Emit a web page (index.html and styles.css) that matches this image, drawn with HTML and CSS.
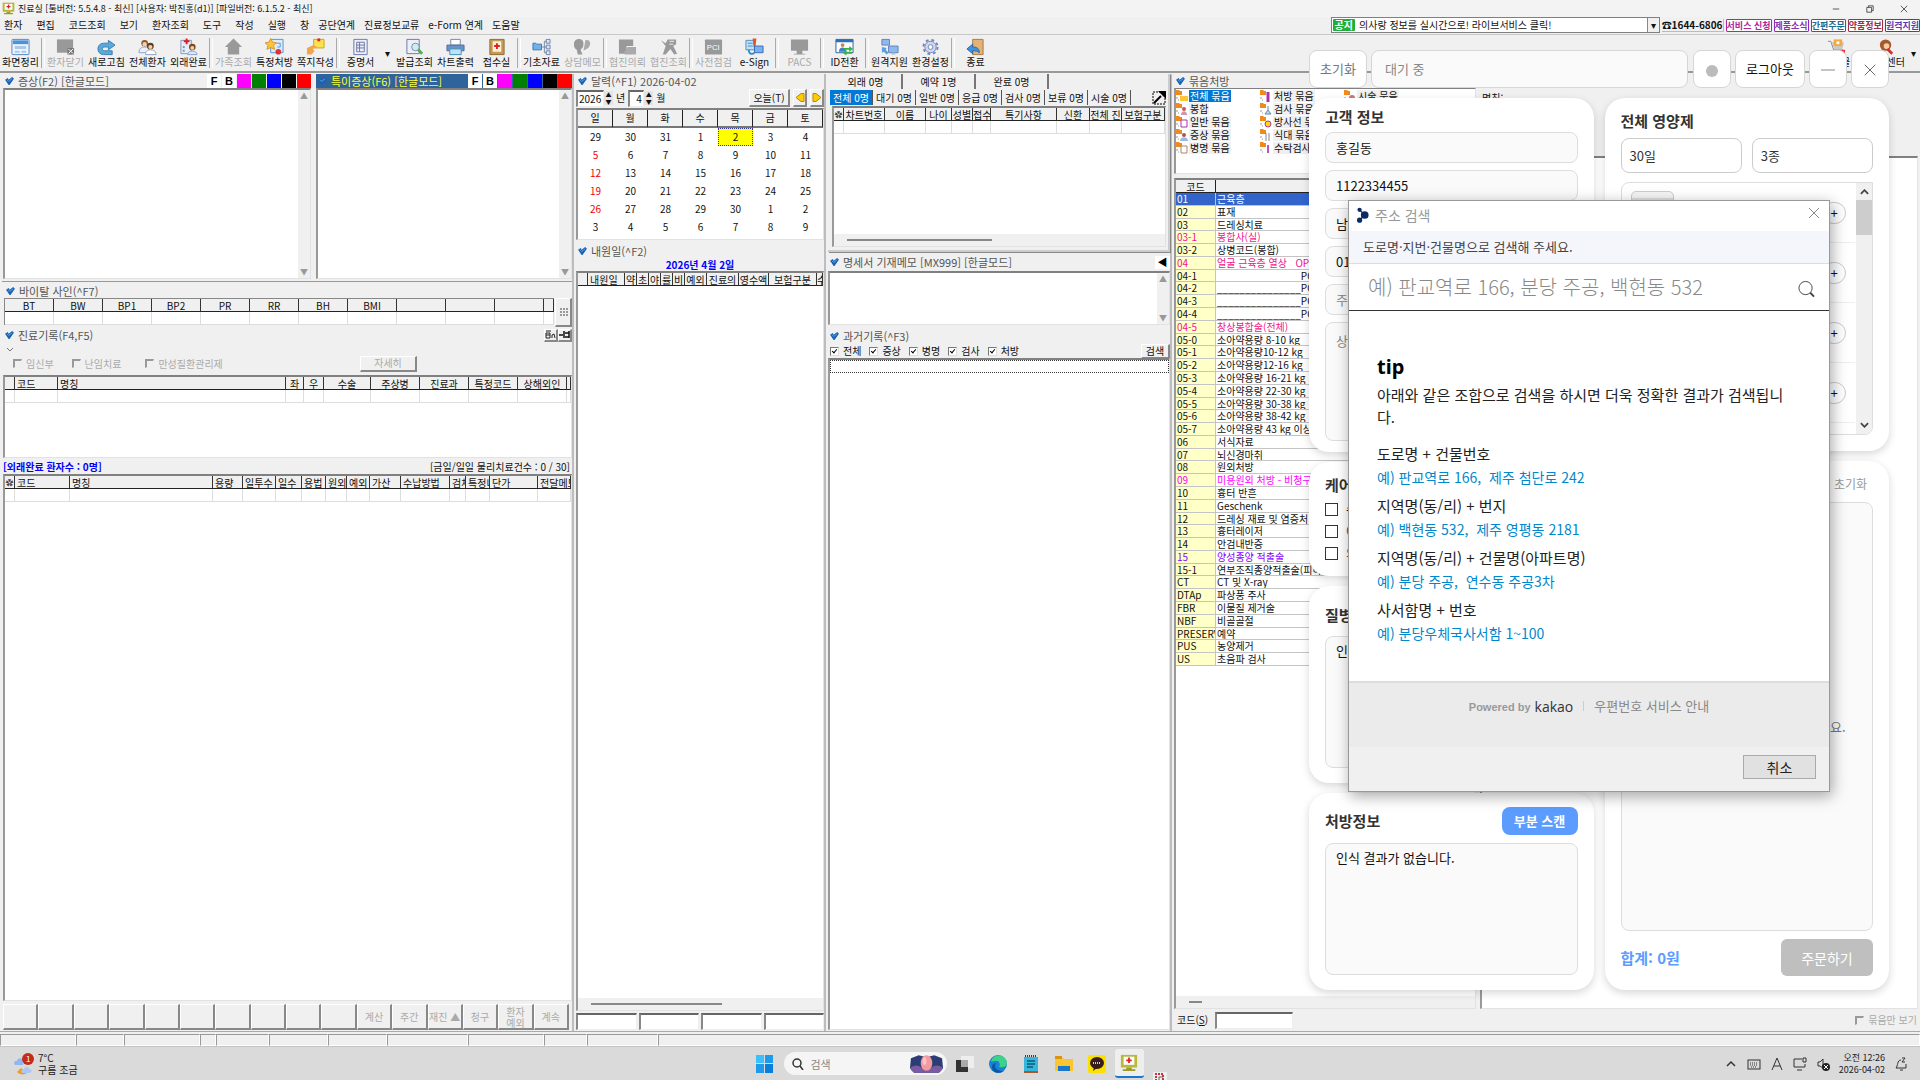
FILE: index.html
```html
<!DOCTYPE html>
<html lang="ko">
<head>
<meta charset="utf-8">
<title>진료실</title>
<link rel="stylesheet" href="styles.css">
</head>
<body>
<svg class="defs" aria-hidden="true">
  <symbol id="tick" viewBox="0 0 10 9"><path d="M0 3l3-2 1 2 4-3 2 2-5 7H4z" fill="#1762b5"/><path d="M2 3l2 2 4-3" fill="none" stroke="#6aa6e6"/></symbol>
  <symbol id="clinic" viewBox="0 0 20 20"><path d="M1 1h18v14H1z" fill="#b9b83a"/><path d="M4 3h12v9H4z" fill="#fff"/><path d="M7 15h6v2H7zM3 17h14v2H3z" fill="#9b9a2a"/><path d="M9 4h2v2h2v2h-2v2H9V8H7V6h2z" fill="#d22"/></symbol>
  <symbol id="person" viewBox="0 0 20 18"><circle cx="7" cy="5" r="3.500" fill="#8b5a2b"/><circle cx="7" cy="6" r="2.300" fill="#f6cfa4"/><path d="M1 15c0-5 3-6 6-6s5 1 5 4v2z" fill="#e9f0fa" stroke="#8aa0c4"/><circle cx="13" cy="8" r="3.600" fill="#5f3a1c"/><circle cx="13" cy="9" r="2.200" fill="#f6cfa4"/><path d="M8 17c0-4 2-5 5-5s6 1 6 5z" fill="#fff" stroke="#8aa0c4"/></symbol>
  <symbol id="pc" viewBox="0 0 20 18"><path d="M2 1h8v6H2zM9 8h10v7H9z" fill="#8fb9ee" stroke="#5c83bd"/><path d="M12 15h4v2h-4z" fill="#b5bfd0"/><path d="M2 9l5 1-1 2 3 3-2 2-3-3-2 1z" fill="#5aa0e0"/></symbol>
  <symbol id="folder" viewBox="0 0 12 12"><path d="M0 0h3l1 1h2v4H0z" fill="#f08a1d"/><path d="M1 7v2M2 10h1" stroke="#999"/></symbol>
</svg>

<header class="titlebar">
  <svg class="app-ico"><use href="#clinic"/></svg>
  <h1>진료실 [툴버전: 5.5.4.8 - 최신] [사용자: 박진홍(d1)] [파일버전: 6.1.5.2 - 최신]</h1>
  <div class="winctl">
    <button aria-label="최소화"><svg viewBox="0 0 10 10"><path d="M1 5h8" stroke="#333"/></svg></button>
    <button aria-label="복원"><svg viewBox="0 0 10 10"><path d="M1 3h6v6H1zM3 3V1h6v6H7" fill="none" stroke="#333"/></svg></button>
    <button aria-label="닫기"><svg viewBox="0 0 10 10"><path d="M1 1l8 8M9 1L1 9" stroke="#333"/></svg></button>
  </div>
</header>
<nav class="menubar">
  <div class="menus">
    <button>환자</button><button>편집</button><button>코드조회</button><button>보기</button><button>환자조회</button><button>도구</button><button>작성</button><button>실행</button><button>창</button><button>공단연계</button><button>진료정보교류</button><button>e-Form 연계</button><button>도움말</button>
  </div>
  <div class="notice"><b>공지</b><span>의사랑 정보를 실시간으로! 라이브서비스 클릭!</span><button aria-label="공지 목록">▾</button></div>
  <strong class="phone">☎1644-6806</strong>
  <div class="badges"><a href="#" class="pk">서비스 신청</a><a href="#" class="pu">제품소식</a><a href="#" class="bl">간편주문</a><a href="#" class="rd">약품정보</a><a href="#" class="vi">원격지원</a></div>
</nav>
<div class="toolbar">
  <button><svg viewBox="0 0 20 18"><rect x="1" y="1" width="18" height="16" rx="1" fill="#eef4fc" stroke="#4f86c6"/><path d="M2 2h16v4H2z" fill="#4d93dc"/><path d="M4 8h12v3H4zM4 13h5v2H4zM11 13h5v2h-5z" fill="#a9c8ea"/></svg>화면정리</button><i></i>
  <button disabled><svg viewBox="0 0 20 18"><path d="M1 1h17v14H1z" fill="#999"/><path d="M12 10h7v7h-7z" fill="#777"/><path d="M13 11l5 5M18 11l-5 5" stroke="#fff"/></svg>환자닫기</button>
  <button><svg viewBox="0 0 20 18"><path d="M12 2l7 5-7 5V9H8c-3 0-3 4 0 4h8v4H7C-1 17-1 5 7 5h5z" fill="#5aa9dd" stroke="#3a80b5"/></svg>새로고침</button>
  <button><svg><use href="#person"/></svg>전체환자</button>
  <button><svg viewBox="0 0 20 18"><path d="M2 2h11v14H2z" fill="#e5edf8" stroke="#7d96bd"/><path d="M7 0h2v2h2v2H9v2H7V4H5V2h2z" fill="#e02020"/><path d="M4 8h2v2H4zM4 12h2v2H4z" fill="#7d96bd"/><circle cx="14" cy="9" r="3.500" fill="#7b4a20"/><circle cx="14" cy="10" r="2" fill="#f6cfa4"/><path d="M9 17c0-5 10-5 10 0z" fill="#dce8f8" stroke="#8aa0c4"/></svg>외래완료</button><i></i>
  <button disabled><svg viewBox="0 0 20 18"><path d="M10 0l9 9h-3v8H4V9H1z" fill="#999"/></svg>가족조회</button>
  <button><svg viewBox="0 0 20 18"><path d="M6 1h13v14H6z" fill="#dcebfb" stroke="#5c93cf"/><path d="M12 5h4v4h-3" stroke="#5c93cf" fill="none"/><path d="M6 0l2 4 4 .5-3 3 1 4-4-2-4 2 1-4-3-3L4 4z" fill="#fbc53a" stroke="#d9962a"/><circle cx="14" cy="14" r="3" fill="#d93440"/></svg>특정처방</button>
  <button><svg viewBox="0 0 20 18"><path d="M8 1h11v9H8z" fill="#fbe24e" stroke="#c9a820"/><path d="M12 0h3v3h-3z" fill="#d22"/><path d="M1 10l7-3 4 2-5 2 2 2-3 4H1z" fill="#f1a54c"/></svg>쪽지작성</button><i></i>
  <button><svg viewBox="0 0 20 18"><path d="M3 1h14v16H3z" fill="#eceff8" stroke="#6b77a8"/><path d="M6 4h8v10H6zM6 7h8M6 10h8M9 4v10" fill="none" stroke="#6b77a8"/></svg>증명서</button><button class="drop" aria-label="증명서 메뉴">▾</button>
  <button><svg viewBox="0 0 20 18"><path d="M2 1h13v15H2z" fill="#eceff8" stroke="#6b77a8"/><circle cx="11" cy="9" r="4" fill="#cdeaf5" stroke="#7c8ea5"/><path d="M14 12l4 4" stroke="#4caf50" stroke-width="3"/></svg>발급조회</button>
  <button><svg viewBox="0 0 20 18"><path d="M5 1h10v6H5z" fill="#fff" stroke="#789"/><path d="M1 7h18v6H1z" fill="#6b92c8" stroke="#4a6c9e"/><path d="M4 11h12v6H4z" fill="#b9e3f7" stroke="#4a8cb5"/></svg>차트출력</button>
  <button><svg viewBox="0 0 20 18"><path d="M3 1h15v16H3z" fill="#c59a56" stroke="#8d6a30"/><path d="M6 3h9v11H6z" fill="#fff1d5"/><path d="M9.500 5h2v2h2v2h-2v2h-2V9h-2V7h2z" fill="#d22"/></svg>접수실</button><i></i>
  <button><svg viewBox="0 0 20 18"><path d="M1 5h3l1 1h5v6H1z" fill="#6fb1e8" stroke="#3a78b5"/><path d="M10 9h3M13 3v12M13 3h3M13 9h3M13 15h3" stroke="#789"/><path d="M15 1h4v4h-4zM15 7h4v4h-4zM15 13h4v4h-4z" fill="#dde6f5" stroke="#6b82b0"/></svg>기초자료</button>
  <button disabled><svg viewBox="0 0 20 18"><path d="M1 6c0-7 10-7 10-1s-2 5-3 7l2 5H5l-1-5c-2-1-3-3-3-6z" fill="#999"/><path d="M13 2c5-2 7 4 3 8l-5 3 1-5z" fill="#aaa"/></svg>상담메모</button><i></i>
  <button disabled><svg viewBox="0 0 20 18"><path d="M1 1h15v7H9v8H1z" fill="#999"/><path d="M10 9h9v8H7v-3z" fill="#aaa"/></svg>협진의뢰</button>
  <button disabled><svg viewBox="0 0 20 18"><path d="M2 2l5 3 2-4h9v5l-3 2 4 8-3 1-4-6-5 6H4l3-9z" fill="#999"/><path d="M11 3h5M11 6h4" stroke="#eee"/></svg>협진조회</button><i></i>
  <button disabled><svg viewBox="0 0 20 18"><rect x="1" y="1" width="18" height="16" rx="1" fill="#999"/><text x="3" y="12" font-size="8" fill="#fff">PCI</text></svg>사전점검</button>
  <button><svg viewBox="0 0 20 18"><path d="M1 2h9v10H1z" fill="#bfe0f7" stroke="#4a8cc0"/><path d="M3 5h5M3 8h5" stroke="#4a8cc0"/><path d="M8 0h4l-1 9H9z" fill="#e2542c"/><path d="M10 8h9v7h-9z" fill="#79b0ef" stroke="#3a6cb5"/><path d="M4 12c0 5 4 5 6 3" stroke="#3a8cc5" fill="none" stroke-width="2"/></svg>e-Sign</button><i></i>
  <button disabled><svg viewBox="0 0 20 18"><path d="M1 1h18v12H1zM7 13h6v3H7zM4 16h12v1H4z" fill="#999"/></svg>PACS</button><i></i>
  <button><svg viewBox="0 0 20 18"><path d="M1 1h18v14H1z" fill="#fff" stroke="#2c5f9e"/><path d="M1 1h18v3H1z" fill="#2c6fbe"/><circle cx="8" cy="7" r="2" fill="#c8864a"/><path d="M4 14c0-6 8-6 8 0z" fill="#3f7fc8"/><path d="M9 10h6V8l4 3-4 3v-2H9zM18 14h-6v-2l-4 3 4 3v-2h6z" fill="#33b24a"/></svg>ID전환</button><i></i>
  <button><svg><use href="#pc"/></svg>원격지원</button>
  <button><svg viewBox="0 0 20 18"><circle cx="10" cy="9" r="6" fill="#cfd8ee" stroke="#7285b8"/><circle cx="10" cy="9" r="7.500" fill="none" stroke="#7285b8" stroke-width="2" stroke-dasharray="3 3"/><circle cx="10" cy="9" r="2.500" fill="#fff" stroke="#7285b8"/></svg>환경설정</button><i></i>
  <button><svg viewBox="0 0 20 18"><path d="M7 1h11v16H7z" fill="#e2b277" stroke="#a87a40"/><path d="M1 11l6-5v3c5 0 7 2 7 6-2-2-4-2-7-2v3z" fill="#3f93de" stroke="#2467ab"/></svg>종료</button>
  <div class="tool-end">
    <button><svg viewBox="0 0 20 18"><path d="M1 3h3l3 9h10" fill="none" stroke="#888"/><path d="M5 4h13l-2 8H8z" fill="#c9c9c9"/><path d="M7 1h9v7H7z" fill="#f6a83c"/><path d="M10 3h3v3h-3z" fill="#fff"/><path d="M8 12h11v5H8z" fill="#e33"/></svg>쇼핑몰</button>
    <button><svg viewBox="0 0 20 18"><circle cx="9" cy="7" r="6" fill="#a9572c"/><circle cx="10" cy="8" r="3" fill="#f6cfa4"/><path d="M11 11l5 5" stroke="#c33" stroke-width="3"/></svg>고객센터</button>
    <button class="drop" aria-label="더 보기">▾</button>
  </div>
</div>

<main>
  <section class="col left">
    <div class="pair">
      <section class="note">
        <header class="ph"><svg><use href="#tick"/></svg><h2>증상(F2) [한글모드]</h2><div class="swatches"><button>F</button><button>B</button><i class="c1"></i><i class="c2"></i><i class="c3"></i><i class="c4"></i><i class="c5"></i></div></header>
        <div class="sunk scrollbox"><textarea aria-label="증상"></textarea><div class="vbar"><span>▲</span><span>▼</span></div></div>
      </section>
      <section class="note">
        <header class="ph on"><svg><use href="#tick"/></svg><h2>특이증상(F6) [한글모드]</h2><div class="swatches"><button>F</button><button>B</button><i class="c1"></i><i class="c2"></i><i class="c3"></i><i class="c4"></i><i class="c5"></i></div></header>
        <div class="sunk scrollbox"><textarea aria-label="특이증상"></textarea><div class="vbar"><span>▲</span><span>▼</span></div></div>
      </section>
    </div>
    <section class="vital">
      <header class="ph"><svg><use href="#tick"/></svg><h2>바이탈 사인(^F7)</h2></header>
      <div class="vital-row">
        <table class="grid mid"><colgroup><col span="11" class="w49"><col></colgroup>
          <thead><tr><th>BT</th><th>BW</th><th>BP1</th><th>BP2</th><th>PR</th><th>RR</th><th>BH</th><th>BMI</th><th></th><th></th><th></th><th></th></tr></thead>
          <tbody><tr><td></td><td></td><td></td><td></td><td></td><td></td><td></td><td></td><td></td><td></td><td></td><td></td></tr></tbody></table>
        <button class="raised more" aria-label="더 보기"><svg viewBox="0 0 9 8"><path d="M1 1h2M4 1h2M7 1h2M1 4h2M4 4h2M7 4h2M1 7h2M4 7h2M7 7h2" stroke="#444"/></svg></button>
      </div>
    </section>
    <section class="record">
      <header class="ph"><svg><use href="#tick"/></svg><h2>진료기록(F4,F5)</h2><div class="mini"><button class="raised" aria-label="보기"><svg viewBox="0 0 11 9"><path d="M1 1h5M1 3h4v5H1zM1 5h4M7 8V5l2-1 1 4" fill="none" stroke="#222"/></svg></button><button class="raised" aria-label="고정"><svg viewBox="0 0 11 9"><path d="M0 5h4M5 1v7M6 3h4v4H6M10 1v7" fill="none" stroke="#111" stroke-width="1.500"/></svg></button></div></header>
      <div class="chev"><svg viewBox="0 0 8 5"><path d="M1 1l3 3 3-3" fill="none" stroke="#777"/></svg></div>
      <div class="flags"><label><input type="checkbox" disabled>임신부</label><label><input type="checkbox" disabled>난임치료</label><label class="far"><input type="checkbox" disabled>만성질환관리제</label><button class="raised" disabled>자세히</button></div>
      <div class="sunk dx"><table class="grid"><colgroup><col class="w10"><col class="w43"><col><col class="w18"><col class="w20"><col class="w47"><col class="w49"><col class="w49"><col class="w49"><col class="w49"><col class="w4"></colgroup>
        <thead><tr><th></th><th class="l">코드</th><th class="l">명칭</th><th>좌</th><th>우</th><th>수술</th><th>주상병</th><th>진료과</th><th>특정코드</th><th>상해외인</th><th></th></tr></thead>
        <tbody><tr><td></td><td></td><td></td><td></td><td></td><td></td><td></td><td></td><td></td><td></td><td></td></tr></tbody></table></div>
    </section>
    <section class="orders">
      <div class="counts"><strong>[외래완료 환자수 : 0명]</strong><span>[금일/일일 물리치료건수 : 0 / 30]</span></div>
      <div class="sunk grow"><table class="grid"><colgroup><col class="w10"><col class="w55"><col><col class="w30"><col class="w33"><col class="w26"><col class="w24"><col class="w21"><col class="w23"><col class="w31"><col class="w49"><col class="w16"><col class="w24"><col class="w48"><col class="w33"></colgroup>
        <thead><tr><th class="g">✿</th><th class="l">코드</th><th class="l">명칭</th><th class="l">용량</th><th class="l">일투수</th><th class="l">일수</th><th class="l">용법</th><th class="l">원외</th><th class="l">예외</th><th class="l">가산</th><th class="l">수납방법</th><th class="l">검체</th><th class="l">특정내</th><th class="l">단가</th><th class="l">전달메모</th></tr></thead>
        <tbody><tr><td></td><td></td><td></td><td></td><td></td><td></td><td></td><td></td><td></td><td></td><td></td><td></td><td></td><td></td><td></td></tr></tbody></table></div>
      <div class="actions"><button></button><button></button><button></button><button></button><button></button><button></button><button></button><button></button><button></button><button></button><button disabled>계산</button><button disabled>주간</button><button disabled>재진 ▲</button><button disabled>청구</button><button disabled>환자<br>예외</button><button disabled>계속</button></div>
    </section>
  </section>

  <section class="col cal">
    <header class="ph"><svg><use href="#tick"/></svg><h2>달력(^F1) 2026-04-02</h2></header>
    <div class="calctl"><input type="text" class="yr" value="2026" aria-label="년"><span class="spin">▲<br>▼</span><span>년</span><input type="text" class="mo" value="4" aria-label="월"><span class="spin">▲<br>▼</span><span>월</span><button class="raised today">오늘(T)</button><button class="raised nav" aria-label="이전"><svg viewBox="0 0 10 10"><path d="M1 5l5-4h3v8H6z" fill="#fc0" stroke="#b80"/></svg></button><button class="raised nav" aria-label="다음"><svg viewBox="0 0 10 10"><path d="M9 5L4 1H1v8h3z" fill="#fc0" stroke="#b80"/></svg></button></div>
    <div class="sunk month"><table>
      <thead><tr><th>일</th><th>월</th><th>화</th><th>수</th><th>목</th><th>금</th><th>토</th></tr></thead>
      <tbody>
      <tr><td class="k">29</td><td>30</td><td>31</td><td>1</td><td class="sel">2</td><td>3</td><td>4</td></tr>
      <tr><td>5</td><td>6</td><td>7</td><td>8</td><td>9</td><td>10</td><td>11</td></tr>
      <tr><td>12</td><td>13</td><td>14</td><td>15</td><td>16</td><td>17</td><td>18</td></tr>
      <tr><td>19</td><td>20</td><td>21</td><td>22</td><td>23</td><td>24</td><td>25</td></tr>
      <tr><td>26</td><td>27</td><td>28</td><td>29</td><td>30</td><td>1</td><td>2</td></tr>
      <tr><td class="k">3</td><td>4</td><td>5</td><td>6</td><td>7</td><td>8</td><td>9</td></tr>
      </tbody></table></div>
    <header class="ph visit"><svg><use href="#tick"/></svg><h2>내원일(^F2)</h2></header>
    <p class="date">2026년 4월 2일</p>
    <div class="sunk grow list"><table class="grid"><colgroup><col class="w10"><col><col class="w12"><col class="w12"><col class="w12"><col class="w12"><col class="w12"><col class="w22"><col class="w32"><col class="w30"><col class="w48"><col class="w6"></colgroup>
      <thead><tr><th></th><th class="l">내원일</th><th>약</th><th>초</th><th>야</th><th>률</th><th>비</th><th>예외</th><th>진료의</th><th>영수액</th><th>보험구분</th><th>수</th></tr></thead></table>
      <div class="hbar"><span></span></div></div>
    <div class="sums"><input type="text" aria-label="합계 1"><input type="text" aria-label="합계 2"><input type="text" aria-label="합계 3"><input type="text" aria-label="합계 4"></div>
  </section>

  <section class="col queue">
    <div class="frame">
      <div class="tabs"><button class="cur">외래 0명</button><button>예약 1명</button><button>완료 0명</button></div>
      <div class="subtabs"><button class="cur">전체 0명</button><button>대기 0명</button><button>일반 0명</button><button>응급 0명</button><button>검사 0명</button><button>보류 0명</button><button>시술 0명</button><svg viewBox="0 0 14 14"><path d="M1 1h12v12H1z" fill="none" stroke="#000" stroke-dasharray="2 1"/><path d="M6 0h8v8z"/><path d="M2 12l7-7" stroke="#000" stroke-width="2"/></svg></div>
      <div class="sunk patients"><table class="grid"><colgroup><col class="w10"><col class="w41"><col class="w41"><col class="w26"><col class="w21"><col class="w18"><col><col class="w33"><col class="w32"><col class="w43"></colgroup>
        <thead><tr><th class="g">✿</th><th>차트번호</th><th>이름</th><th>나이</th><th>성별</th><th>접수</th><th>특기사항</th><th>신환</th><th>전체 진</th><th>보험구분</th></tr></thead>
        <tbody><tr><td></td><td></td><td></td><td></td><td></td><td></td><td></td><td></td><td></td><td></td></tr></tbody></table>
        <div class="hbar"><span></span></div></div>
    </div>
    <header class="ph memo-h"><svg><use href="#tick"/></svg><h2>명세서 기재메모 [MX999] [한글모드]</h2><button class="fold" aria-label="접기">◀</button></header>
    <div class="sunk scrollbox memo"><textarea aria-label="명세서 기재메모"></textarea><div class="vbar"><span>▲</span><span>▼</span></div></div>
    <header class="ph past"><svg><use href="#tick"/></svg><h2>과거기록(^F3)</h2></header>
    <div class="checks"><label><input type="checkbox" checked>전체</label><label><input type="checkbox" checked>증상</label><label><input type="checkbox" checked>병명</label><label><input type="checkbox" checked>검사</label><label><input type="checkbox" checked>처방</label><button class="raised">검색</button></div>
    <div class="sunk grow history"><div class="focus"></div></div>
  </section>

  <section class="col bundle">
    <header class="ph"><svg><use href="#tick"/></svg><h2>묶음처방</h2></header>
    <div class="split">
      <div class="codes">
        <ul class="sunk tree">
          <li class="cur"><svg><use href="#folder"/><path d="M4 6h8v5H4z" fill="#fbc53a"/></svg><span>전체 묶음</span></li><li><svg><use href="#folder"/><circle cx="8" cy="6" r="2" fill="#c55"/><path d="M5 12c0-5 6-5 6 0z" fill="#c9a"/></svg><span>봉합</span></li><li><svg><use href="#folder"/><path d="M5 4h6v7H5z" fill="#fff" stroke="#a3a"/></svg><span>일반 묶음</span></li><li><svg><use href="#folder"/><circle cx="8" cy="6" r="2" fill="#a55"/><path d="M4 12c0-5 8-5 8 0z" fill="#9bd"/></svg><span>증상 묶음</span></li><li><svg><use href="#folder"/><path d="M5 4h6v7H5z" fill="#fff" stroke="#a86"/></svg><span>병명 묶음</span></li>
          <li><svg><use href="#folder"/><path d="M8 2v10" stroke="#a3a" stroke-width="3"/></svg><span>처방 묶음</span></li><li><svg><use href="#folder"/><path d="M8 3v4l-3 4h6l-3-4" fill="#bde" stroke="#68a"/></svg><span>검사 묶음</span></li><li><svg><use href="#folder"/><circle cx="8" cy="8" r="3" fill="#fd0" stroke="#a3a"/></svg><span>방사선 묶음</span></li><li><svg><use href="#folder"/><path d="M6 4v8M9 4v8" stroke="#888"/></svg><span>식대 묶음</span></li><li><svg><use href="#folder"/><path d="M8 3v8" stroke="#b5b" stroke-width="2"/></svg><span>수탁검사</span></li>
          <li><svg><use href="#folder"/><circle cx="8" cy="8" r="3" fill="#c77"/></svg><span>시술 묶음</span></li>
        </ul>
        <div class="sunk grow codebox"><table class="code">
          <thead><tr><th>코드</th><th>명칭</th></tr></thead>
          <tbody>
          <tr class="sel"><td>01</td><td>근육층</td></tr><tr><td>02</td><td>표재</td></tr><tr><td>03</td><td>드레싱치료</td></tr><tr class="pink"><td>03-1</td><td>봉합사(실)</td></tr><tr><td>03-2</td><td>상병코드(봉합)</td></tr><tr class="pink"><td>04</td><td>얼굴 근육층 열상 &nbsp; OP</td></tr><tr><td>04-1</td><td>_______________POD</td></tr><tr><td>04-2</td><td>_______________POD</td></tr><tr><td>04-3</td><td>_______________POD</td></tr><tr><td>04-4</td><td>_______________POD</td></tr><tr class="pink"><td>04-5</td><td>창상봉합술(전체)</td></tr><tr><td>05-0</td><td>소아약용량 8-10 kg</td></tr><tr><td>05-1</td><td>소아약용량10-12 kg</td></tr><tr><td>05-2</td><td>소아약용량12-16 kg</td></tr><tr><td>05-3</td><td>소아약용량 16-21 kg</td></tr><tr><td>05-4</td><td>소아약용량 22-30 kg</td></tr><tr><td>05-5</td><td>소아약용량 30-38 kg</td></tr><tr><td>05-6</td><td>소아약용량 38-42 kg</td></tr><tr><td>05-7</td><td>소아약용량 43 kg 이상</td></tr><tr><td>06</td><td>서식자료</td></tr><tr><td>07</td><td>뇌신경마취</td></tr><tr><td>08</td><td>원외처방</td></tr><tr class="mag"><td>09</td><td>미용원외 처방 - 비청구</td></tr><tr><td>10</td><td>흉터 반흔</td></tr><tr><td>11</td><td>Geschenk</td></tr><tr><td>12</td><td>드레싱 재료 및 염증처치</td></tr><tr><td>13</td><td>흉터레이저</td></tr><tr><td>14</td><td>안검내반증</td></tr><tr class="vio"><td>15</td><td>양성종양 적출술</td></tr><tr><td>15-1</td><td>연부조직종양적출술(피하)</td></tr><tr><td>CT</td><td>CT 및 X-ray</td></tr><tr><td>DTAp</td><td>파상풍 주사</td></tr><tr><td>FBR</td><td>이물질 제거술</td></tr><tr><td>NBF</td><td>비골골절</td></tr><tr><td>PRESERV</td><td>예약</td></tr><tr><td>PUS</td><td>농양제거</td></tr><tr><td>US</td><td>초음파 검사</td></tr>
          </tbody></table><div class="hbar"><span></span></div></div>
      </div>
      <div class="detail"><p>명칭:</p><div class="sunk grow"></div></div>
    </div>
    <div class="codefoot"><label><span>코드(<u>S</u>)</span><input type="text"></label><label class="off"><input type="checkbox" disabled>묶음만 보기</label></div>
  </section>
</main>
<div class="statusbar"><i class="w76"></i><i class="w48"></i><i class="w76"></i><i class="w16"></i><i class="w53"></i><i class="w59"></i><i class="w59"></i><i class="w81"></i><i class="w76"></i><i class="w43"></i><i class="w71"></i><i class="rest"></i></div>

<footer class="taskbar">
  <div class="weather"><svg viewBox="0 0 20 24"><path d="M3 20c4 4 11 3 13-3-4 2-7 1-9-1z" fill="#f39a1f"/><path d="M2 13c-3 0-2-5 1-4 1-4 6-3 6 0v4z" fill="#8fb8f0"/><path d="M9 21c-3 0-2-4 1-4 1-3 5-2 5 0 4 0 3 4 0 4z" fill="#a9c8f5"/><circle cx="14" cy="7" r="6" fill="#c42b1c"/><text x="12" y="10" font-size="8" fill="#fff">1</text></svg><p>7°C<br>구름 조금</p></div>
  <div class="apps">
    <svg class="a17" viewBox="0 0 17 18"><path d="M0 0h8v8H0z" fill="#3cc0fb"/><path d="M9 0h8v8H9zM0 9h8v9H0z" fill="#1c9bec"/><path d="M9 9h8v9H9z" fill="#0a7edc"/></svg>
    <label class="search"><svg viewBox="0 0 12 12"><circle cx="5" cy="5" r="4" fill="none" stroke="#333" stroke-width="1.500"/><path d="M8 8l3 4" stroke="#333" stroke-width="1.500"/></svg><input type="text" placeholder="검색" aria-label="검색"><svg class="flower" viewBox="0 0 36 20"><path d="M2 4l8-3 8 2 8-2 8 3 1 10-4 5H5l-4-5z" fill="#2b3d73"/><path d="M1 14c8-6 12 0 17 3 5-3 9-9 17-3-3 6-7 5-11 5H10c-5 0-7-1-9-5z" fill="#7a5aa0"/><ellipse cx="18" cy="9" rx="6" ry="8" fill="#f29aa0"/><ellipse cx="16" cy="7" rx="2" ry="4" fill="#fbc4c4"/></svg></label>
    <svg class="a18" viewBox="0 0 18 18"><path d="M5 1h13v12H5z" fill="#eee"/><path d="M0 5h12v12H0z" fill="#333"/><path d="M5 5h7v7H5z" fill="#aaa"/></svg>
    <svg class="a18" viewBox="0 0 18 18"><circle cx="9" cy="9" r="9" fill="#1684d0"/><path d="M2 6c3-8 15-7 16 2 0 4-5 5-8 4 2-3 0-7-4-6-2 0-3 1-4 0z" fill="#3fd08a"/><path d="M7 8c-3 4 1 9 8 8-7 5-15-1-11-7z" fill="#0b56a5"/></svg>
    <svg class="a18" viewBox="0 0 18 18"><path d="M2 2h14v14H2z" fill="#35b7dc"/><path d="M5 6h8M5 9h8M5 12h6" stroke="#0c5878" stroke-width="1.500"/><path d="M3 1h12" stroke="#246" stroke-width="2" stroke-dasharray="1 1"/><path d="M2 16h14v2H2z" fill="#a8562a"/></svg>
    <svg class="a18" viewBox="0 0 18 18"><path d="M0 2h7l2 2h9v12H0z" fill="#f9c531"/><path d="M0 1h7v3H0z" fill="#d99411"/><path d="M3 11h12v5H3z" fill="#1878cc"/></svg>
    <svg class="a18" viewBox="0 0 18 18"><rect width="18" height="18" rx="2" fill="#fae100"/><ellipse cx="9" cy="8" rx="7" ry="6" fill="#371d1e"/><path d="M6 12l-1 4 4-3z" fill="#371d1e"/><path d="M5 8h8" stroke="#fae100" stroke-width="2" stroke-dasharray="1 1"/></svg>
    <span class="live"><svg class="a18"><use href="#clinic"/></svg></span>
    <svg class="snip" viewBox="0 0 14 9"><path d="M0 0h14v9H0z" fill="#eee"/><path d="M3 9V2h7v7" fill="none" stroke="#c33" stroke-width="2" stroke-dasharray="2 1"/><path d="M6 9V5h4" fill="none" stroke="#567"/></svg>
  </div>
  <div class="tray">
    <svg viewBox="0 0 14 14"><path d="M3 9l4-4 4 4" fill="none" stroke="#333" stroke-width="1.500"/></svg>
    <svg viewBox="0 0 14 14"><rect x="1" y="3" width="12" height="9" fill="none" stroke="#333"/><path d="M3 6h8M3 8h8M4 10h6" stroke="#333" stroke-dasharray="1 1"/></svg>
    <svg viewBox="0 0 14 14"><path d="M2 13L7 1l5 12M4 9h6" fill="none" stroke="#333"/></svg>
    <svg viewBox="0 0 14 14"><path d="M9 2H1v8h11V7M4 13h5M10 1h3v4h-3z" fill="none" stroke="#333"/></svg>
    <svg viewBox="0 0 14 14"><path d="M2 5h2l3-3v9L4 9H2z" fill="none" stroke="#333"/><circle cx="10" cy="10" r="4" fill="#222"/><path d="M8 8l4 4M12 8l-4 4" stroke="#fff"/></svg>
    <time>오전 12:26<br>2026-04-02</time>
    <svg viewBox="0 0 14 14"><path d="M2 11c2-2 1-8 5-8M12 7v4H2M6 13h3" fill="none" stroke="#333"/><path d="M8 1h3L8 5h3" fill="none" stroke="#333"/></svg>
  </div>
</footer>

<aside class="widget">
  <div class="wtop"><button class="gray">초기화</button><output>대기 중</output><button class="sq" aria-label="상태"><i></i></button><button class="out">로그아웃</button><button class="sq" aria-label="접기"><svg viewBox="0 0 16 16"><path d="M0 8h16" stroke="#777"/></svg></button><button class="sq" aria-label="닫기"><svg viewBox="0 0 16 16"><path d="M2 2l12 12M14 2L2 14" stroke="#555"/></svg></button></div>
  <div class="wcols">
    <div class="wcol">
      <section class="card cust"><h2>고객 정보</h2><input type="text" value="홍길동" aria-label="이름"><input type="text" value="1122334455" aria-label="번호"><input type="text" value="남" aria-label="성별"><input type="text" value="010" aria-label="전화"><input type="text" placeholder="주소" aria-label="주소"><textarea placeholder="상세 주소" aria-label="상세 주소"></textarea></section>
      <section class="card care"><h2>케어</h2><label><input type="checkbox">수면</label><label class="b"><input type="checkbox">여성</label><label class="r"><input type="checkbox">외상</label></section>
      <section class="card dis"><h2>질병정보</h2><textarea aria-label="질병정보">인식 결과가 없습니다.</textarea></section>
      <section class="card rx"><header><h2>처방정보</h2><button>부분 스캔</button></header><textarea aria-label="처방정보">인식 결과가 없습니다.</textarea></section>
    </div>
    <div class="wcol">
      <section class="card supp"><h2>전체 영양제</h2><div class="two"><button>30일</button><button>3종</button></div>
        <div class="items"><ul><li><i></i><button>+</button></li><li><i></i><button>+</button></li><li><i></i><button>+</button></li><li><i></i><button>+</button></li></ul><div class="sbar"><svg viewBox="0 0 10 6"><path d="M1 5l4-4 4 4" fill="none" stroke="#444" stroke-width="2"/></svg><b></b><svg viewBox="0 0 10 6"><path d="M1 1l4 4 4-4" fill="none" stroke="#444" stroke-width="2"/></svg></div></div>
      </section>
      <section class="card cart"><header><h2>주문 목록</h2><button class="txt">초기화</button></header><div class="empty">주문할 제품이 없습니다.<br>추가할 영양제를 먼저 선택해 주세요.</div><footer><strong>합계: 0원</strong><button>주문하기</button></footer></section>
    </div>
  </div>
</aside>

<section class="dialog" role="dialog" aria-labelledby="dt">
  <header><svg viewBox="0 0 14 18"><circle cx="9" cy="9" r="4.500" fill="#0b2a66"/><circle cx="3" cy="3" r="2.500" fill="#0b2a66"/><circle cx="3" cy="15" r="3" fill="#0b2a66"/><path d="M3 3l6 6-6 6" fill="none" stroke="#0b2a66" stroke-width="1.500"/></svg><h2 id="dt">주소 검색</h2><button aria-label="닫기"><svg viewBox="0 0 12 12"><path d="M1 1l10 10M11 1L1 11" stroke="#888"/></svg></button></header>
  <p class="guide">도로명·지번·건물명으로 검색해 주세요.</p>
  <div class="find"><input type="text" placeholder="예) 판교역로 166, 분당 주공, 백현동 532" aria-label="주소 검색어"><button aria-label="검색"><svg viewBox="0 0 18 18"><circle cx="8" cy="8" r="7" fill="none" stroke="#444"/><path d="M13 13l4 4" stroke="#444" stroke-width="2"/></svg></button></div>
  <div class="tips"><h3>tip</h3><p>아래와 같은 조합으로 검색을 하시면 더욱 정확한 결과가 검색됩니<br>다.</p>
    <dl><dt>도로명 + 건물번호</dt><dd>예) 판교역로 166, &nbsp;제주 첨단로 242</dd><dt>지역명(동/리) + 번지</dt><dd>예) 백현동 532, &nbsp;제주 영평동 2181</dd><dt>지역명(동/리) + 건물명(아파트명)</dt><dd>예) 분당 주공, &nbsp;연수동 주공3차</dd><dt>사서함명 + 번호</dt><dd>예) 분당우체국사서함 1~100</dd></dl></div>
  <div class="power"><span>Powered by</span><b>kakao</b><a href="#">우편번호 서비스 안내</a></div>
  <footer><button>취소</button></footer>
</section>
</body>
</html>
```
FILE: styles.css
```css
* { box-sizing: border-box; margin: 0; padding: 0; }
html, body { height: 100%; }
body { display: flex; flex-direction: column; position: relative; overflow: hidden; background: #f0f0f0; color: #111; font: 10px/12px "Noto Sans CJK KR", sans-serif; white-space: nowrap; }
button, input, textarea { font: inherit; color: inherit; border: 0; background: none; outline: 0; border-radius: 0; }
textarea { resize: none; display: block; white-space: pre-wrap; }
ul { list-style: none; }
a { text-decoration: none; }
i { font-style: normal; }
.defs { position: absolute; width: 0; height: 0; }
h1, h2 { font-size: 11px; font-weight: 400; }

.titlebar { display: flex; align-items: center; height: 17px; padding-left: 2px; background: #f3f3f3; }
.titlebar h1 { flex: 1; margin-left: 3px; font-size: 9px; }
.app-ico { width: 13px; height: 13px; }
.winctl { display: flex; gap: 14px; padding-right: 6px; }
.winctl button { width: 20px; height: 14px; line-height: 8px; }
.winctl svg { width: 8px; height: 8px; }
.menubar { display: flex; align-items: center; height: 17px; padding-bottom: 1px; }
.menus { display: flex; gap: 14px; flex: 1; padding-left: 4px; }
.menus button:nth-child(n+10) { margin-left: -5px; }
.notice { display: flex; align-items: center; width: 329px; height: 16px; background: #fff; border: 1px solid #808080; padding-left: 1px; }
.notice b { background: #1fae3c; color: #fff; padding: 0 2px; margin-right: 4px; border-radius: 1px; }
.notice span { flex: 1; }
.notice button { width: 12px; height: 14px; background: #f0f0f0; border-left: 1px solid #888; }
.phone { width: 62px; margin: 0 2px; text-align: center; border: 1px solid #bbb; border-width: 0 1px 1px 0; }
.badges { display: flex; gap: 2px; font-size: 9px; line-height: 11px; font-weight: 700; }
.badges a { border: 1px solid; border-radius: 1px; background: #fff; height: 13px; }
.pk { color: #b0269c; } .pu { color: #8c2fb5; } .bl { color: #1e6c92; } .rd { color: #a03048; } .vi { color: #5a38b0; }
.toolbar { display: flex; height: 39px; border-top: 1px solid #c8c8c8; border-bottom: 2px solid #999; }
.toolbar button { display: flex; flex-direction: column; align-items: center; width: 41px; padding-top: 3px; line-height: 12px; }
.toolbar svg { width: 19px; height: 18px; flex: none; font-family: "Liberation Sans", sans-serif; }
.toolbar > i { width: 4px; margin: 3px 0; border-left: 1px solid #aaa; border-right: 1px solid #fff; background: #f0f0f0; }
.toolbar button:disabled { color: #aaa; }
.toolbar .drop { width: 13px; justify-content: center; padding: 0; }
.tool-end { display: flex; margin-left: auto; }
.tool-end button:first-child { margin-right: 9px; }

main { flex: 1; min-height: 0; display: grid; grid-template-columns: minmax(0,574fr) minmax(0,252fr) minmax(0,346fr) minmax(0,748fr); border-bottom: 1px solid #aaa; padding-top: 1px; }
.col { display: flex; flex-direction: column; min-height: 0; min-width: 0; padding: 0 0 1px 2px; border-right: 2px solid #bdbdbd; }
.ph { display: flex; align-items: center; height: 14px; gap: 4px; padding-left: 2px; color: #555; flex: none; }
.ph svg { width: 9px; height: 8px; flex: none; }
.ph h2 { line-height: 14px; flex: 1; }
.ph.on { background: #2f639c; color: #ff3; }
.sunk { background: #fff; border: 1px solid #e2e2e2; border-top: 2px solid #808080; border-left: 2px solid #999; min-height: 0; }
.raised { background: #f0f0f0; border: 1px solid #fff; border-right: 2px solid #888; border-bottom: 2px solid #888; }
.raised:disabled { color: #aaa; }
.grow { flex: 1; overflow: hidden; }
.pair { display: grid; grid-template-columns: 309fr 257fr; gap: 4px; height: 208px; border-bottom: 1px solid #999; }
.note { display: flex; flex-direction: column; height: 205px; padding-left: 1px; }
.swatches { display: flex; gap: 1px; }
.swatches button { width: 14px; height: 14px; background: #fff; font-weight: 700; font-family: "Liberation Sans", sans-serif; font-size: 11px; color: #000; }
.swatches i { width: 14px; height: 14px; }
.c1 { background: #f0f; } .c2 { background: #008000; } .c3 { background: #00f; } .c4 { background: #000; } .c5 { background: #f00; }
.scrollbox { display: flex; flex: 1; }
.scrollbox textarea { flex: 1; min-width: 0; height: 100%; }
.vbar { display: flex; flex-direction: column; justify-content: space-between; width: 12px; background: #f0f0f0; color: #999; font-size: 8px; text-align: center; }

table { border-collapse: separate; border-spacing: 0; table-layout: fixed; width: 100%; }
.grid th { height: 13px; line-height: 11px; font-weight: 400; background: #f0f0f0; border-right: 1px solid #333; border-bottom: 1px solid #222; overflow: hidden; text-align: center; }
.grid th.l { text-align: left; padding-left: 2px; }
.grid th.g { font-size: 8px; color: #444; }
.grid td { height: 13px; border-right: 1px solid #ddd; border-bottom: 1px solid #ddd; }
.w4 { width: 4px; } .w6 { width: 6px; } .w10 { width: 10px; } .w12 { width: 12px; } .w16 { width: 16px; } .w18 { width: 18px; } .w20 { width: 20px; } .w21 { width: 21px; } .w22 { width: 22px; } .w23 { width: 23px; } .w24 { width: 24px; } .w26 { width: 26px; } .w30 { width: 30px; } .w31 { width: 31px; } .w32 { width: 32px; } .w33 { width: 33px; } .w41 { width: 41px; } .w43 { width: 43px; } .w47 { width: 47px; } .w48 { width: 48px; } .w49 { width: 49px; } .w53 { width: 53px; } .w55 { width: 55px; } .w59 { width: 59px; } .w71 { width: 71px; } .w76 { width: 76px; } .w81 { width: 81px; }
.vital { padding: 1px 0 0 2px; }
.vital .ph { height: 15px; }
.vital-row { display: flex; height: 29px; }
.vital-row .grid { flex: 1; width: 0; height: 27px; border-top: 1px solid #888; border-left: 1px solid #888; background: #fff; }
.more { width: 17px; margin-left: 1px; } .more svg { width: 9px; height: 8px; }
.mini { display: flex; } .mini button { width: 14px; height: 13px; line-height: 9px; } .mini svg { width: 11px; height: 9px; }
.record { padding: 0 0 0 1px; }
.record .ph { height: 16px; }
.chev { height: 12px; padding-left: 3px; line-height: 10px; } .chev svg { width: 8px; height: 5px; }
.flags { display: flex; align-items: center; height: 18px; padding: 0 0 1px 10px; gap: 18px; color: #aaa; }
label { display: flex; align-items: center; gap: 4px; }
.flags .far { margin-left: 6px; }
.flags input, .off input { appearance: none; width: 9px; height: 9px; border: 1px solid #999; border-width: 2px 1px 1px 2px; border-right-color: #eee; border-bottom-color: #eee; }
.flags button { width: 57px; height: 16px; margin-left: auto; margin-right: 155px; line-height: 12px; }
.dx { height: 83px; margin-top: 2px; }
.orders { display: flex; flex-direction: column; flex: 1; min-height: 0; padding-left: 1px; }
.counts { display: flex; justify-content: space-between; height: 16px; line-height: 18px; padding-right: 2px; }
.counts strong { color: #00f; }
.actions { display: flex; height: 26px; margin-top: 3px; padding-right: 3px; }
.actions button { flex: 1; background: #f0f0f0; border: 1px solid #fff; border-right: 2px solid #888; border-bottom: 2px solid #888; color: #aaa; line-height: 11px; }

.calctl { display: flex; align-items: center; gap: 3px; height: 20px; }
.calctl input, .codefoot input[type=text], .sums input { background: #fff; border: 1px solid #eee; border-top: 2px solid #666; border-left: 2px solid #888; height: 17px; }
.calctl .yr { width: 28px; padding-left: 1px; } .calctl .mo { width: 16px; padding-left: 6px; }
.spin { font-size: 6px; line-height: 7px; width: 9px; margin-left: -3px; background: #e4e4e4; text-align: center; }
.today { width: 41px; height: 18px; margin-left: auto; }
.nav { width: 14px; height: 18px; line-height: 0; } .nav svg { width: 10px; height: 11px; }
.month { height: 132px; flex: none; }
.month th { height: 18px; line-height: 14px; font-weight: 400; background: #f0f0f0; border-right: 1px solid #222; border-bottom: 2px solid #777; text-align: center; }
.month td { height: 18px; text-align: center; }
.month td:first-child { color: #e00; } .month .k:first-child { color: #111; }
.month .sel { background: #ff0; border: 1px dotted #33a; }
.visit { margin-top: 4px; }
.date { font-weight: 700; color: #00f; text-align: center; height: 13px; line-height: 13px; }
.list, .patients, .codebox { display: flex; flex-direction: column; }
.hbar { margin-top: auto; height: 12px; background: #f0f0f0; padding: 5px 0 0 13px; flex: none; }
.hbar span { display: block; height: 2px; width: 131px; background: #888; }
.sums { display: grid; grid-template-columns: repeat(4,1fr); gap: 2px; margin-top: 2px; } .sums input { width: 100%; }

.frame { border: 2px solid #ccc; border-top: 0; border-left: 0; box-shadow: 1px 1px 0 #888; padding: 0 2px 3px; height: 178px; display: flex; flex-direction: column; flex: none; }
.tabs { display: flex; height: 15px; }
.tabs button { width: 73px; border-right: 2px solid #777; }
.subtabs { display: flex; align-items: center; height: 17px; }
.subtabs button { width: 43px; height: 15px; border-right: 1px solid #555; line-height: 13px; }
.subtabs .cur { background: #0078d7; color: #fff; }
.subtabs svg { width: 14px; height: 14px; margin-left: auto; }
.patients { flex: 1; margin: 0 0 0 2px; }
.patients .hbar span { width: 145px; }
.memo-h { height: 18px; margin-top: 1px; }
.fold { background: #fff; width: 15px; height: 13px; color: #000; }
.memo { flex: none; height: 54px; }
.past { height: 17px; margin-top: 2px; }
.checks { display: flex; align-items: center; height: 14px; gap: 8px; padding-left: 2px; }
.checks input { appearance: none; width: 9px; height: 9px; background: #fff; border: 1px solid #777; border-right-color: #ddd; border-bottom-color: #ddd; position: relative; }
.checks input:checked::after { content: ""; position: absolute; left: 2px; top: 0; width: 2px; height: 4px; border: solid #000; border-width: 0 1px 1px 0; rotate: 40deg; }
.checks button { margin-left: auto; width: 29px; height: 15px; line-height: 12px; }
.focus { height: 13px; border: 1px dotted #333; }

.bundle { padding: 0 2px 0 2px; border-right: 0; }
.split { flex: 1; min-height: 0; display: grid; grid-template-columns: 302fr 438fr; gap: 4px; }
.codes, .detail { display: flex; flex-direction: column; min-height: 0; }
.tree { display: grid; grid-template-rows: repeat(5,13px); grid-auto-flow: column; grid-template-columns: 84px 84px 1fr; height: 86px; flex: none; margin-bottom: 4px; border-top-width: 1px; }
.tree li { display: flex; align-items: center; gap: 1px; overflow: hidden; }
.tree li svg { width: 12px; height: 12px; }
.tree span { background: #f0f0f0; padding: 0 1px; }
.tree .cur span { background: #0078d7; color: #fff; }
.code { height: 486px; flex: none; }
.code th { height: 13px; line-height: 11px; background: #f0f0f0; border-right: 1px solid #222; border-bottom: 1px solid #222; font-weight: 400; }
.code th:first-child { width: 40px; }
.code td { line-height: 11px; padding-left: 2px; vertical-align: top; overflow: hidden; border-bottom: 1px solid #c4c4c4; border-right: 1px solid #c4c4c4; }
.code td:first-child { background: #ffffc8; padding-left: 1px; }
.code td:last-child { padding-left: 1px; }
.code .sel td { background: #3264cc; color: #fff; }
.code .pink td { color: #f0148c; } .code .mag td { color: #f0f; } .code .vio td { color: #80f; }
.codebox .hbar span { width: 13px; }
.detail p { height: 68px; padding: 4px 2px; }
.codefoot { display: flex; justify-content: space-between; align-items: center; height: 22px; padding: 0 1px 0 3px; }
.codefoot input[type=text] { width: 78px; margin-left: 3px; }
.off { color: #aaa; }
.statusbar { display: flex; height: 14px; padding-top: 2px; }
.statusbar i { border: 1px solid #fff; border-top-color: #999; border-left-color: #999; }
.rest { flex: 1; }

.taskbar { display: flex; align-items: center; height: 34px; background: #dadada; border-top: 1px solid #c4c4c4; color: #222; flex: none; position: relative; }
.weather, .tray { flex: 1; display: flex; align-items: center; }
.weather { padding-left: 14px; gap: 4px; } .weather svg { width: 20px; height: 24px; }
.apps { display: flex; align-items: center; gap: 15px; }
.a17 { width: 17px; height: 18px; margin-right: -4px; } .a18 { width: 18px; height: 18px; }
.search { width: 163px; height: 23px; background: #f5f5f5; border-radius: 12px; padding: 0 3px 0 8px; gap: 7px; margin-right: -6px; }
.search svg { width: 12px; height: 12px; flex: none; } .search .flower { width: 35px; height: 20px; }
.search input { flex: 1; width: 0; font-size: 11px; }
.live { width: 29px; height: 29px; padding: 5px; margin: 0 -6px; background: #eee; border-radius: 3px; border-bottom: 2px solid #1878cc; }
.snip { width: 14px; height: 9px; margin-top: 25px; }
.tray { justify-content: flex-end; gap: 9px; padding-right: 12px; } .tray svg { width: 14px; height: 14px; } .tray time { text-align: right; font-size: 9px; }

.widget { position: absolute; top: 50px; right: 31px; bottom: 90px; width: 580px; display: flex; flex-direction: column; gap: 10px; font-size: 13px; line-height: 20px; }
.wtop { display: flex; gap: 4px; height: 38px; }
.wtop > * { background: #fff; border: 1px solid #d6d6d6; border-radius: 8px; }
.wtop .gray { width: 58px; color: #777; }
.wtop output { flex: 1; margin-right: 1px; background: #fafafa; color: #888; padding: 8px 13px; }
.wtop .sq { width: 38px; } .wtop .sq svg { width: 14px; height: 14px; vertical-align: middle; }
.wtop .sq i { display: block; width: 12px; height: 12px; margin: 3px auto 0; border-radius: 50%; background: #bbb; }
.wtop .out { width: 70px; color: #111; }
.wcols { flex: 1; min-height: 0; display: grid; grid-template-columns: 1fr 1fr; gap: 11px; }
.wcol { display: flex; flex-direction: column; gap: 10px; min-height: 0; }
.card { display: flex; flex-direction: column; background: #fff; border-radius: 20px; padding: 8px 16px 11px; box-shadow: 0 3px 8px rgba(0,0,0,.16); }
.card h2 { font-size: 15px; font-weight: 700; line-height: 22px; color: #333; }
.card textarea, .cust input, .empty { background: #fafafa; border: 1px solid #ddd; border-radius: 8px; padding: 4px 10px; }
.cust { gap: 7px; } .cust h2 { margin-bottom: -3px; } .cust input { height: 31px; } .cust textarea { height: 119px; padding-top: 8px; }
::placeholder { color: #888; opacity: 1; }
.care { height: 114px; padding-top: 12px; } .care h2 { margin-bottom: 2px; }
.care label { height: 22px; gap: 8px; } .care .b { color: #258; } .care .r { color: #c33; }
.care input { appearance: none; width: 13px; height: 13px; border: 1px solid #333; }
.dis, .rx { padding-bottom: 15px; min-height: 0; } .dis { height: 197px; padding-top: 18px; } .dis h2 { margin-bottom: 10px; }
.dis textarea, .rx textarea { flex: 1; }
.rx { flex: 1; padding-top: 14px; gap: 8px; }
.card header, .cart footer { display: flex; justify-content: space-between; align-items: center; }
.rx header button { width: 76px; height: 28px; border-radius: 8px; background: #5c9cff; color: #fff; font-weight: 700; }
.supp { height: 353px; padding: 12px 16px 16px; } .supp h2 { margin-bottom: 6px; }
.two { display: grid; grid-template-columns: 1fr 1fr; gap: 10px; }
.two button { height: 35px; border: 1px solid #ccc; border-radius: 8px; text-align: left; padding-left: 8px; color: #333; }
.items { display: flex; flex: 1; min-height: 0; margin-top: 9px; border: 1px solid #ddd; border-radius: 8px 0 8px 8px; overflow: hidden; }
.items ul { flex: 1; } .items li { display: flex; justify-content: space-between; height: 60px; margin: 0 1px 0 9px; padding: 8px 9px 0 0; border-bottom: 1px solid #eee; }
.items li i { width: 43px; height: 43px; border: 1px solid #ccc; border-radius: 5px; background: linear-gradient(#f4f4f4 6px, #ddd 6px); }
.items li button { width: 24px; height: 22px; margin-top: 11px; border: 1px solid #ccc; border-radius: 11px; line-height: 18px; }
.sbar { width: 16px; background: #f0f0f0; display: flex; flex-direction: column; align-items: center; padding: 6px 0; }
.sbar svg { width: 9px; height: 6px; } .sbar b { width: 16px; height: 35px; background: #cdcdcd; margin: 5px 0 auto; }
.cart { flex: 1; min-height: 0; padding: 12px 16px 14px; } .cart .txt { font-size: 12px; color: #999; padding-right: 6px; }
.empty { flex: 1; display: grid; place-content: center; text-align: center; margin: 7px 0 8px; color: #777; }
.cart footer strong { font-size: 15px; color: #5c9cff; } .cart footer button { width: 92px; height: 37px; border-radius: 6px; background: #bfbfbf; color: #fff; font-size: 14px; }

.dialog { position: absolute; top: 200px; right: 90px; width: 482px; display: flex; flex-direction: column; background: #fff; border: 1px solid #999; box-shadow: 2px 4px 14px rgba(0,0,0,.35); font-size: 15px; line-height: 22px; color: #222; }
.dialog header { display: flex; align-items: center; height: 30px; padding: 0 8px 3px; gap: 6px; }
.dialog header svg { width: 12px; height: 16px; } .dialog h2 { flex: 1; font-size: 14px; line-height: 20px; color: #999; } .dialog header button { width: 14px; height: 22px; }
.guide { height: 33px; line-height: 31px; padding-left: 14px; font-size: 13px; background: #f5f6fb; border-bottom: 1px solid #ddd; color: #444; }
.find { display: flex; align-items: center; height: 47px; border-bottom: 1px solid #333; padding: 0 14px 0 19px; }
.find input { flex: 1; font-size: 20px; font-weight: 300; line-height: 28px; } .find svg { width: 17px; height: 18px; vertical-align: middle; }
.tips { padding: 40px 28px 31px; } .tips h3 { font: 700 20px/32px "Noto Sans", sans-serif; color: #000; padding-bottom: 1px; }
dl { margin-top: 14px; } dt { line-height: 23px; } dd { font-size: 14px; line-height: 24px; padding-bottom: 5px; color: #08c; }
.power { height: 66px; display: flex; justify-content: center; padding-top: 12px; background: #ebebeb; border-top: 2px solid #ddd; }
.power span { font: 700 11px/24px "Liberation Sans", sans-serif; color: #999; } .power b { font: 500 14px/24px "Open Sans", sans-serif; margin: 0 10px 0 4px; color: #333; }
.power a { font-size: 13px; line-height: 22px; color: #888; padding-left: 11px; background: linear-gradient(#ccc,#ccc) 0 6px/1px 10px no-repeat; }
.dialog footer { height: 44px; padding: 8px 13px; text-align: right; background: #f0f0f0; } .dialog footer button { width: 73px; height: 24px; border: 1px solid #aaa; background: #e1e1e1; font-size: 14px; line-height: 20px; }
```
